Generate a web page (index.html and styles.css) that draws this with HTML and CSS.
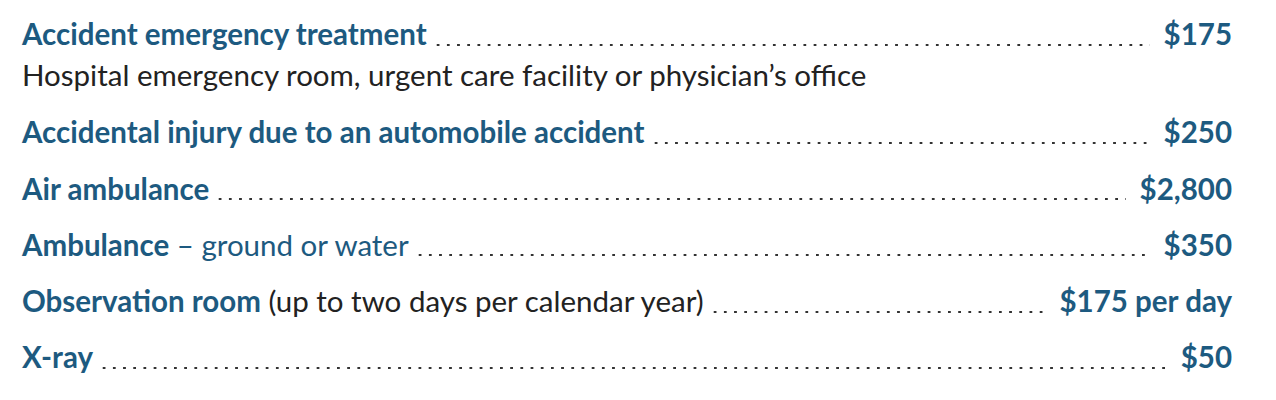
FILE: index.html
```html
<!DOCTYPE html>
<html lang="en">
<head>
<meta charset="utf-8">
<link rel="stylesheet" href="styles.css">
</head>
<body>
<ul class="benefits">
  <li class="item item-first">
    <div class="line">
      <span class="label"><b>Accident emergency treatment</b></span>
      <span class="leader"></span>
      <span class="price">$175</span>
    </div>
    <div class="note">Hospital emergency room, urgent care facility or physician’s office</div>
  </li>
  <li class="item">
    <div class="line">
      <span class="label"><b>Accidental injury due to an automobile accident</b></span>
      <span class="leader"></span>
      <span class="price">$250</span>
    </div>
  </li>
  <li class="item">
    <div class="line">
      <span class="label"><b>Air ambulance</b></span>
      <span class="leader"></span>
      <span class="price">$2,800</span>
    </div>
  </li>
  <li class="item">
    <div class="line">
      <span class="label"><b>Ambulance</b> – ground or water</span>
      <span class="leader"></span>
      <span class="price">$350</span>
    </div>
  </li>
  <li class="item">
    <div class="line">
      <span class="label"><b>Observation room</b> <span class="plain">(up to two days per calendar year)</span></span>
      <span class="leader"></span>
      <span class="price">$175 per day</span>
    </div>
  </li>
  <li class="item">
    <div class="line">
      <span class="label"><b>X-ray</b></span>
      <span class="leader"></span>
      <span class="price">$50</span>
    </div>
  </li>
</ul>
</body>
</html>
```

FILE: styles.css
```css
html, body {
  margin: 0;
  padding: 0;
  background: #ffffff;
}
body {
  font-family: "Lato", "Open Sans", sans-serif;
  font-size: 29.5px;
  color: #1d5a80;
}
.benefits {
  list-style: none;
  margin: 0;
  padding: 13px 44px 0 22px;
  display: flex;
  flex-direction: column;
  gap: 14.3px;
}
.item {
  display: flex;
  flex-direction: column;
}
.item-first {
  margin-bottom: 2px;
}
.line {
  display: flex;
  align-items: baseline;
  line-height: 42px;
}
.label b {
  font-weight: 700;
}
.plain {
  color: #222222;
}
.leader {
  flex: 1;
  align-self: stretch;
  margin: 0 14px 0 6px;
  background-image: radial-gradient(circle, #333333 1.1px, transparent 1.5px);
  background-size: 10.2px 4px;
  background-repeat: repeat-x;
  background-position: left 0 bottom 8.5px;
}
.price {
  font-weight: 700;
}
.note {
  color: #222222;
  line-height: 40px;
}
```
